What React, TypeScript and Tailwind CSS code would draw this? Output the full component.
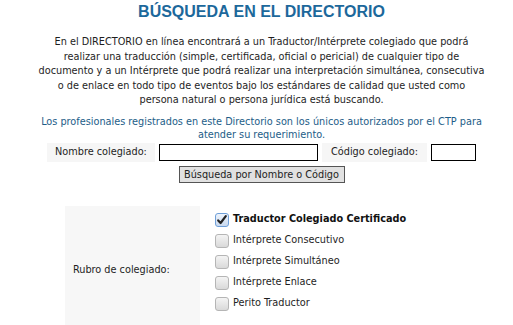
import React from 'react';

const font = { fontFamily: '"DejaVu Sans Condensed", "DejaVu Sans", sans-serif' };

const options = [
  { label: 'Traductor Colegiado Certificado', checked: true },
  { label: 'Intérprete Consecutivo', checked: false },
  { label: 'Intérprete Simultáneo', checked: false },
  { label: 'Intérprete Enlace', checked: false },
  { label: 'Perito Traductor', checked: false },
];

function Check({ checked }: { checked: boolean }) {
  return (
    <span
      className={
        'relative inline-block h-[14px] w-[14px] shrink-0 rounded-[3px] border ' +
        (checked
          ? 'border-[#6f9fd8] bg-gradient-to-b from-[#eef4fc] to-[#c9d9ee]'
          : 'border-[#b5b5b5] bg-gradient-to-b from-[#f4f4f4] to-[#d9d9d9]')
      }
    >
      {checked && (
        <svg viewBox="0 0 14 14" className="absolute left-[-1px] top-[-1px] h-[14px] w-[14px]">
          <path d="M3.2 7.4 L5.6 10 L10.8 3.2" fill="none" stroke="#222" strokeWidth="2.2" strokeLinecap="round" strokeLinejoin="round" />
        </svg>
      )}
    </span>
  );
}

export default function App() {
  return (
    <div className="h-[325px] w-[513px] overflow-hidden bg-white pl-[10px] text-[10.8px] text-[#1e1e1e]" style={font}>
      <h1
        className="pt-[1px] text-center text-[16px] font-bold leading-[22px] text-[#1c689b]"
        style={{ fontFamily: '"Liberation Sans", Arial, sans-serif' }}
      >
        BÚSQUEDA EN EL DIRECTORIO
      </h1>

      <p className="mx-auto mt-[12px] w-[470px] text-center leading-[14.5px]">
        En el DIRECTORIO en línea encontrará a un Traductor/Intérprete colegiado que podrá
        <br />
        realizar una traducción (simple, certificada, oficial o pericial) de cualquier tipo de
        <br />
        documento y a un Intérprete que podrá realizar una interpretación simultánea, consecutiva
        <br />
        o de enlace en todo tipo de eventos bajo los estándares de calidad que usted como
        <br />
        persona natural o persona jurídica está buscando.
      </p>

      <p className="mx-auto mt-[7px] w-[470px] text-center leading-[13px] text-[#1d5d88]">
        Los profesionales registrados en este Directorio son los únicos autorizados por el CTP para
        <br />
        atender su requerimiento.
      </p>

      <div className="mt-[2px] flex items-center justify-center gap-[4px]">
        <div className="flex h-[19px] w-[108px] items-center justify-center bg-[#f6f6f6]">Nombre colegiado:</div>
        <input type="text" className="h-[17px] w-[159px] border border-black bg-white" />
        <div className="flex h-[19px] w-[105px] items-center justify-center bg-[#f6f6f6]">Código colegiado:</div>
        <input type="text" className="h-[17px] w-[45px] border border-black bg-white" />
      </div>

      <div className="mt-[4px] flex justify-center">
        <button className="h-[17px] w-[166px] border border-[#555] bg-[#e1e1e1] text-[10.8px] leading-[15px] text-[#1e1e1e]">
          Búsqueda por Nombre o Código
        </button>
      </div>

      <div className="ml-[55px] mt-[23px] flex">
        <div className="flex h-[130px] w-[135px] items-center bg-[#f7f7f7] pl-[8px]">Rubro de colegiado:</div>
        <div className="flex flex-col gap-[7px] pl-[15px] pt-[7px]">
          {options.map(o => (
            <label key={o.label} className="flex h-[14px] items-center gap-[4px]">
              <Check checked={o.checked} />
              <span className={o.checked ? 'font-bold text-[#111]' : ''}>{o.label}</span>
            </label>
          ))}
        </div>
      </div>
    </div>
  );
}
